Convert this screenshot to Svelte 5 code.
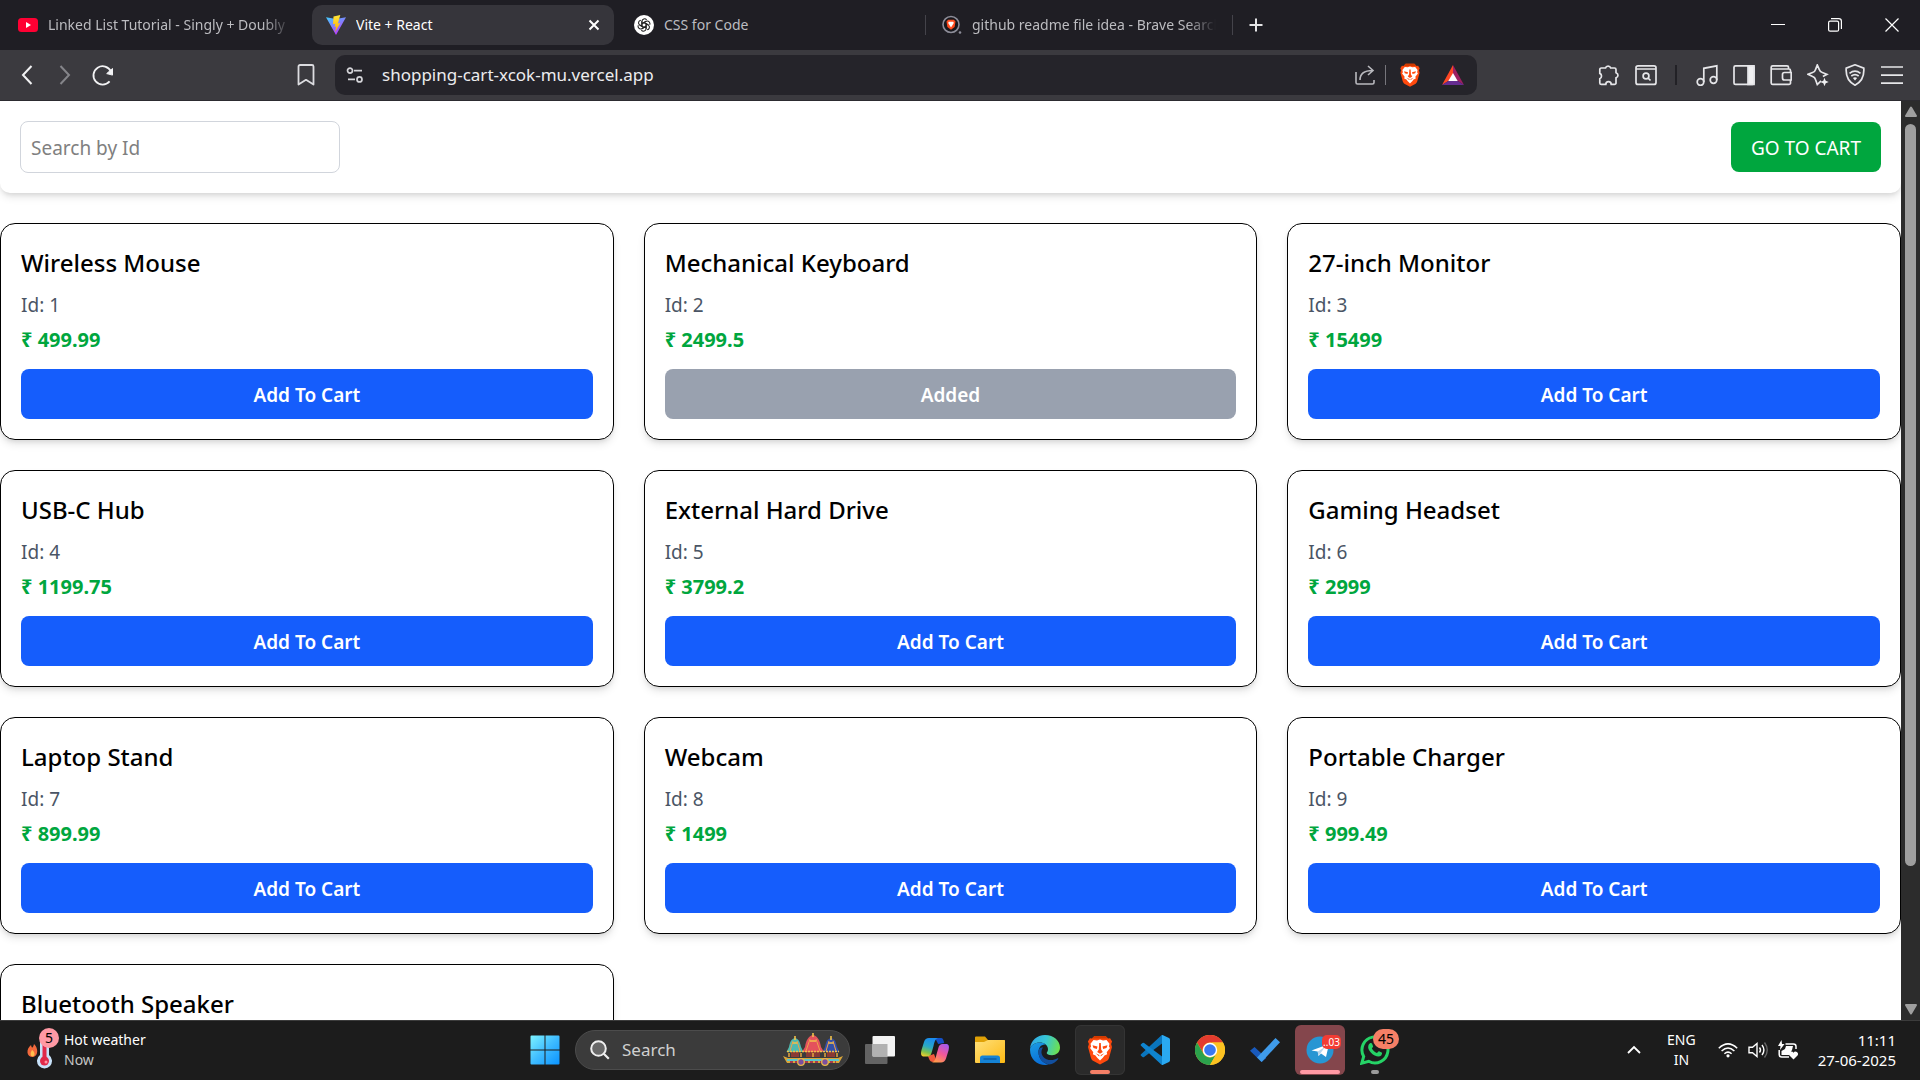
<script>
  const products = $state([
    { id: 1, title: 'Wireless Mouse', price: 499.99, added: false },
    { id: 2, title: 'Mechanical Keyboard', price: 2499.5, added: true },
    { id: 3, title: '27-inch Monitor', price: 15499, added: false },
    { id: 4, title: 'USB-C Hub', price: 1199.75, added: false },
    { id: 5, title: 'External Hard Drive', price: 3799.2, added: false },
    { id: 6, title: 'Gaming Headset', price: 2999, added: false },
    { id: 7, title: 'Laptop Stand', price: 899.99, added: false },
    { id: 8, title: 'Webcam', price: 1499, added: false },
    { id: 9, title: 'Portable Charger', price: 999.49, added: false },
    { id: 10, title: 'Bluetooth Speaker', price: 1999.99, added: false }
  ]);
  let query = $state('');
  const shown = $derived(products.filter((p) => String(p.id).includes(query.trim())));
</script>

{#snippet lion(size)}
  <svg width={size} height={size} viewBox="0 0 30 30" aria-hidden="true">
    <path d="M9.5 1h11l2.6 2.6 2-.3 2 3.2-1 2.6.9 3-2.9 10.6c-.5 1.6-1.2 2.4-2.6 3.4L15 29.600l-6.500-3.500c-1.400-1-2.100-1.800-2.600-3.400L3 12.100l.9-3-1-2.600 2-3.200 2 .3z" fill="#ff4a0e" />
    <path d="M9.500 1h11l2.600 2.600H6.900z" fill="#d13a00" />
    <path d="M15 4.500l3 .9 3.500-.5 3 3.900-.6 2.800 1 1.500-3.200 4.200.5 2-2.700 1.200-1.700 2.200L15 25.500l-2.800-2.800-1.700-2.200-2.700-1.200.5-2-3.200-4.200 1-1.500-.6-2.800 3-3.900 3.500.5z" fill="#fff" />
    <path d="M7.500 10.300l5 1.300-.7 2.300-3.300-1zM22.500 10.300l-5 1.300.7 2.300 3.300-1zM14.200 8h1.600l.4 6.500 1.600 2.400L15 18.800l-2.800-1.900 1.600-2.400zM10.600 18.300l3.700 1.700v1.500zM19.400 18.300l-3.700 1.700v1.500z" fill="#ff4a0e" />
  </svg>
{/snippet}

<div class="screen">
  <nav class="tabs" aria-label="Tabs">
    <button class="tab">
      <svg width="20" height="20" viewBox="0 0 20 20" aria-hidden="true"><rect y="3" width="20" height="14" rx="3.500" fill="#ff0033" /><path d="M8 7v6l5-3z" fill="#fff" /></svg>
      <span class="label faded">Linked List Tutorial - Singly + Doubly</span>
    </button>
    <div class="tab active">
      <svg width="20" height="20" viewBox="0 0 20 20" aria-hidden="true">
        <defs>
          <linearGradient id="vp" x1="0" y1="0" x2=".6" y2="1"><stop offset="0" stop-color="#41d1ff" /><stop offset="1" stop-color="#bd34fe" /></linearGradient>
          <linearGradient id="vy" x1="0" y1="0" x2="0" y2="1"><stop offset="0" stop-color="#ffe83a" /><stop offset="1" stop-color="#ffa800" /></linearGradient>
        </defs>
        <path d="M0 2.300L10 4l10-1.700L10 20z" fill="url(#vp)" />
        <path d="M14.300 0L7.500 1.400 7 9.200l2.200-.5-.7 3.300 1.700-.4-1.200 5.600 5.300-9.300-2.400.5z" fill="url(#vy)" />
      </svg>
      <span class="label">Vite + React</span>
      <button class="icon close" aria-label="Close tab">
        <svg width="12" height="12" viewBox="0 0 12 12"><path d="M1.500 1.500l9 9M10.500 1.500l-9 9" stroke="#fff" stroke-width="2" /></svg>
      </button>
    </div>
    <button class="tab">
      <svg width="20" height="20" viewBox="0 0 20 20" aria-hidden="true">
        <circle cx="10" cy="10" r="10" fill="#fff" />
        <g fill="none" stroke="#222" stroke-width="1.100">
          {#each [0, 60, 120, 180, 240, 300] as turn}
            <path transform="rotate({turn} 10 10)" d="M7.900 11.200V6.200a2.600 2.600 0 0 1 4.700-1.300M7.900 8.800L12.200 6.300" />
          {/each}
        </g>
      </svg>
      <span class="label">CSS for Code</span>
    </button>
    <button class="tab divided">
      <svg width="20" height="20" viewBox="0 0 20 20" aria-hidden="true">
        <circle cx="9" cy="9.500" r="8" fill="#17171c" stroke="#8d8d99" stroke-width="1.600" />
        <path d="M6 4.800h6l1.500 1.700-.9 5.500L9 14.800 5.400 12l-.9-5.500z" fill="#ff4a1c" />
        <path d="M6.700 6.800h4.600l.5 1.300L9 12.500 6.200 8.100z" fill="#fff" />
        <circle cx="18" cy="17.500" r="1.300" fill="#8d8d99" />
      </svg>
      <span class="label faded">github readme file idea - Brave Search</span>
    </button>
    <button class="icon plus" aria-label="New tab">
      <svg width="14" height="14" viewBox="0 0 14 14"><path d="M7 .5v13M.5 7h13" stroke="#e4e4e6" stroke-width="2" /></svg>
    </button>
    <div class="window">
      <button class="icon" aria-label="Minimize"><svg width="14" height="14" viewBox="0 0 14 14"><path d="M0 6.500h14" stroke="#fff" /></svg></button>
      <button class="icon" aria-label="Restore"><svg width="14" height="14" viewBox="0 0 14 14" fill="none" stroke="#fff" stroke-width="1.200"><rect x=".6" y="3.200" width="10" height="10" rx="1.500" /><path d="M3 .7h7.800a2.600 2.600 0 0 1 2.600 2.600v7.700" /></svg></button>
      <button class="icon" aria-label="Close"><svg width="14" height="14" viewBox="0 0 14 14"><path d="M.5.5l13 13M13.500.5l-13 13" stroke="#fff" stroke-width="1.200" /></svg></button>
    </div>
  </nav>

  <div class="toolbar">
    <div class="nav">
      <button class="icon" aria-label="Back"><svg width="12" height="20" viewBox="0 0 12 20"><path d="M10.500 1L2 10l8.500 9" fill="none" stroke="#f2f2f4" stroke-width="2" /></svg></button>
      <button class="icon" aria-label="Forward"><svg width="12" height="20" viewBox="0 0 12 20"><path d="M1.500 1L10 10l-8.500 9" fill="none" stroke="#85858a" stroke-width="2" /></svg></button>
      <button class="icon" aria-label="Reload"><svg width="22" height="22" viewBox="0 0 22 22"><path d="M17.600 17.400A9.200 9.200 0 1 1 19 7.500" fill="none" stroke="#f2f2f4" stroke-width="1.800" /><path d="M20.500 4.500v6.600l-5.800-1.500z" fill="#f2f2f4" stroke="#f2f2f4" stroke-linejoin="round" /></svg></button>
      <button class="icon mark" aria-label="Bookmark"><svg width="18" height="22" viewBox="0 0 18 22"><path d="M1.500 20.500V2.500a1.500 1.500 0 0 1 1.500-1.500h12a1.500 1.500 0 0 1 1.500 1.500v18L9 15.800z" fill="none" stroke="#dcdce0" stroke-width="1.800" stroke-linejoin="round" /></svg></button>
    </div>
    <div class="address">
      <svg width="18" height="16" viewBox="0 0 18 16" fill="none" stroke="#d4d4d8" stroke-width="1.700" aria-hidden="true"><circle cx="4" cy="3.600" r="2.500" /><path d="M8 3.600h8M2 12.400h7" /><circle cx="13.500" cy="12.400" r="2.500" /></svg>
      <input class="url" aria-label="Address" value="shopping-cart-xcok-mu.vercel.app" />
      <button class="icon" aria-label="Share"><svg width="20" height="20" viewBox="0 0 20 20" fill="none" stroke="#b9b9be" stroke-width="1.600"><path d="M1 7v10.500A1.500 1.500 0 0 0 2.500 19h15a1.500 1.500 0 0 0 1.500-1.500v-2.500M5 15C5 9 9 5.500 17.500 5.500M13 1l5 4.500-5 4.500" /></svg></button>
      <span class="bar"></span>
      <button class="icon shields" aria-label="Brave Shields">{@render lion(24)}</button>
      <button class="icon" aria-label="Brave Rewards"><svg width="22" height="20" viewBox="0 0 22 20"><path d="M11 0L0 20l11-7z" fill="#ff4724" /><path d="M11 0l11 20-11-7z" fill="#9e1f63" /><path d="M0 20h22l-11-7z" fill="#662d91" /><path d="M11 8l4.700 8H6.300z" fill="#fff" /></svg></button>
    </div>
    <div class="tools">
      <button class="icon" aria-label="Extensions"><svg width="22" height="22" viewBox="0 0 22 22"><path d="M3.500 4H7.500a2.700 2.700 0 0 1 5.200 0h3.800a1.500 1.500 0 0 1 1.500 1.500v3.200a2.700 2.700 0 0 1 0 5.200v5a1.500 1.500 0 0 1-1.500 1.500h-3.300a2.700 2.700 0 0 0-5.400 0H3.300A1.500 1.500 0 0 1 1.800 19v-4.300a2.900 2.900 0 0 0 0-5.300V5.500A1.500 1.500 0 0 1 3.500 4z" /></svg></button>
      <button class="icon" aria-label="Search in page"><svg width="22" height="22" viewBox="0 0 22 22"><rect x="1" y="1.800" width="20" height="18.600" rx="2" /><path d="M1 5h20M13 14l2.500 2.500" /><circle cx="11" cy="12" r="2.900" /></svg></button>
      <span class="bar dark"></span>
      <button class="icon" aria-label="Media"><svg width="22" height="22" viewBox="0 0 22 22"><circle cx="4.500" cy="18" r="3.300" /><circle cx="17.500" cy="16" r="3.300" /><path d="M7.800 18V4.300l13-2.500V16M7.800 4.500" /></svg></button>
      <button class="icon" aria-label="Sidebar"><svg width="22" height="22" viewBox="0 0 22 22"><rect x="1" y="1.800" width="20" height="18.600" rx="1.500" /><path d="M15 1.800h6v18.600h-6z" fill="#f0f0f2" /></svg></button>
      <button class="icon" aria-label="Wallet"><svg width="22" height="22" viewBox="0 0 22 22"><path d="M20.500 8.500V6.500A1.500 1.500 0 0 0 19 5H1.200v14A1.500 1.500 0 0 0 2.700 20.400H19a1.500 1.500 0 0 0 1.500-1.500v-2.500M1.200 5V3.300a1.500 1.500 0 0 1 1.500-1.500H17A1.500 1.500 0 0 1 18.500 3.300V5M21.200 8.500h-6.700a2 2 0 0 0-2 2v3.500a2 2 0 0 0 2 2h6.700z" /></svg></button>
      <button class="icon" aria-label="Leo assistant"><svg width="22" height="22" viewBox="0 0 22 22"><path d="M14 16.800L10.300 20.500 8.500 15.500Q7.900 13.200 5.600 12.500L1 10.300 5.600 8.500Q7.900 7.900 8.500 5.600L10.300 1l2 4.600Q13 7.900 15.300 8.500l4.600 1.800-4 2.200" /><path d="M17.500 13.800l1.200 3 3 1.200-3 1.200-1.200 3-1.200-3-3-1.200 3-1.200z" fill="#f0f0f2" stroke="none" /></svg></button>
      <button class="icon" aria-label="VPN"><svg width="22" height="22" viewBox="0 0 22 22"><path d="M11 .8l8.800 3.400c.5 7-1 13-8.800 17C3.200 17.200 1.700 11.200 2.200 4.200z" /><path d="M5.500 9.300q5.500-4.400 11 0M7.300 12q3.700-2.900 7.400 0" /><path d="M8.900 14q2.100-1.700 4.200 0L11 16.500z" fill="#f0f0f2" stroke="none" /></svg></button>
      <button class="icon" aria-label="Menu"><svg width="22" height="22" viewBox="0 0 22 22"><path d="M0 3h22M0 11.200h22M0 19.200h22" /></svg></button>
    </div>
  </div>

  <div class="view">
    <main>
      <header>
        <input class="search" placeholder="Search by Id" aria-label="Search by Id" bind:value={query} />
        <button class="go">GO TO CART</button>
      </header>
      <div class="grid">
        {#each shown as product (product.id)}
          <article>
            <h2>{product.title}</h2>
            <p class="id">Id: {product.id}</p>
            <p class="price">₹ {product.price}</p>
            <button class="add" class:added={product.added} onclick={() => (product.added = true)}>
              {product.added ? 'Added' : 'Add To Cart'}
            </button>
          </article>
        {/each}
      </div>
    </main>
    <div class="scroll" aria-hidden="true">
      <svg width="12" height="12" viewBox="0 0 12 12"><path d="M6 1.500L11 10H1z" fill="#9f9f9f" stroke="#9f9f9f" stroke-width="2" stroke-linejoin="round" /></svg>
      <div class="track"><div class="thumb"></div></div>
      <svg width="12" height="12" viewBox="0 0 12 12"><path d="M6 10.500L11 2H1z" fill="#9f9f9f" stroke="#9f9f9f" stroke-width="2" stroke-linejoin="round" /></svg>
    </div>
  </div>

  <footer>
    <button class="weather">
      <span class="heat">
        <svg width="36" height="44" viewBox="0 0 36 44" aria-hidden="true">
          <path d="M5 17c1 4 2 3 3-1 4 3 5 12-1 13-7 0-7-8-2-12z" fill="#f2693c" />
          <path d="M6 22c2 1 4 5 1 6.500-3 0-3-3.500-1-6.500z" fill="#ffc04d" />
          <path d="M14 10a4.500 4.500 0 0 1 9 0v17a7.500 7.500 0 1 1-9 0z" fill="#c8e2fa" />
          <path d="M18.500 14v18" stroke="#e0294a" stroke-width="4" /><circle cx="18.500" cy="33" r="4.500" fill="#e0294a" /><circle cx="20" cy="34" r="1.500" fill="#ff8fa0" />
        </svg>
        <span class="count">5</span>
      </span>
      <span class="words"><span>Hot weather</span><span class="dim">Now</span></span>
    </button>

    <div class="apps">
      <button class="app" aria-label="Start">
        <svg width="30" height="30" viewBox="0 0 30 30">
          <defs><linearGradient id="win" x1="0" y1="0" x2="1" y2="1"><stop offset="0" stop-color="#7df3ff" /><stop offset=".5" stop-color="#3fbcff" /><stop offset="1" stop-color="#0a93ff" /></linearGradient></defs>
          <path d="M1.500.5H14.500v14H.5v-13a1 1 0 0 1 1-1zM15.500.5h13a1 1 0 0 1 1 1v13h-14zM.5 15.500h14v14h-13a1 1 0 0 1-1-1zM15.500 15.500h14v13a1 1 0 0 1-1 1h-13z" fill="url(#win)" />
        </svg>
      </button>
      <label class="find">
        <svg width="20" height="20" viewBox="0 0 20 20" aria-hidden="true"><circle cx="8.500" cy="8.500" r="7.300" fill="#686868" stroke="#efefef" stroke-width="2" /><path d="M13.800 13.800l5 5" stroke="#efefef" stroke-width="2.200" /></svg>
        <input placeholder="Search" aria-label="Search" />
        <svg width="62" height="34" viewBox="0 0 62 34" aria-hidden="true">
          <path d="M1 23l5 2h50l5-2-4 7H5z" fill="#d9a63a" />
          <path d="M5 26h52v2H5z" fill="#59c7cf" /><path d="M8 29h46" stroke="#a93a4b" stroke-width="2" stroke-dasharray="3 2" />
          <path d="M9 17h8v7H9zM24 18h14v6H24zM45 17h8v7h-8z" fill="#8a3a34" />
          <path d="M13 5c4 1 5 4 6 9l2.500 5h-17L7 14c1-5 2-8 6-9z" fill="#4fb9ae" />
          <path d="M31 2c5 1 7 6 8 12l3 5H20l3-5c1-6 3-11 8-12z" fill="#e4525c" />
          <path d="M49 5c4 1 5 4 6 9l2.500 5h-17L43 14c1-5 2-8 6-9z" fill="#3350a8" />
          <path d="M13 3v4M31 0v4M49 3v4M10 10h6M28 8h6M46 10h6" stroke="#f2c14a" stroke-width="1.600" />
          <path d="M5 18.500h16M20 18.500h22M41 18.500h16" stroke="#f2c14a" stroke-width="1.600" stroke-dasharray="2 1" />
          <path d="M11 8L8 18M15 8l3 10M28 6l-4 12M34 6l4 12M47 8l-3 10M51 8l3 10" stroke="#f0a04a" stroke-width="1" />
          <path d="M7 20v4M19 20v4M31 20v4M43 20v4M55 20v4" stroke="#e8a53c" stroke-width="1.500" />
          <g fill="#7a4fa0" stroke="#e8b64a" stroke-width="1.300"><circle cx="19" cy="29" r="3.300" /><circle cx="43" cy="29" r="3.300" /></g>
        </svg>
      </label>
      <button class="app" aria-label="Task view">
        <svg width="30" height="28" viewBox="0 0 30 28"><rect y="8" width="22.500" height="20" rx="1" fill="#636363" /><rect x="7.500" width="22.500" height="20.500" rx="1" fill="#f3f3f3" /><path d="M7.500 8h15v12.500h-15z" fill="#b1b1b1" /></svg>
      </button>
      <button class="app" aria-label="Copilot">
        <svg width="30" height="28" viewBox="0 0 30 28">
          <defs>
            <linearGradient id="c1" x1=".5" y1="0" x2=".2" y2="1"><stop offset="0" stop-color="#1a8cf0" /><stop offset=".45" stop-color="#2aa9c5" /><stop offset=".75" stop-color="#7cc250" /><stop offset="1" stop-color="#f5cf2b" /></linearGradient>
            <linearGradient id="c2" x1=".8" y1="0" x2=".3" y2="1"><stop offset="0" stop-color="#a35af0" /><stop offset=".5" stop-color="#f0579a" /><stop offset="1" stop-color="#ff9a4a" /></linearGradient>
          </defs>
          <path d="M15 2h6c2 0 2.500 2 3.200 5l-6 1z" fill="#1450c8" /><path d="M8 20l6-2 3 8h-4c-3 0-4-3-5-6z" fill="#f05a3c" />
          <path d="M9 2h9c-3 1-3.500 4-4.500 8l-2 7c-.6 2-2 3.500-4 3.500H4C1 20.500.5 18 1.500 14L4 6c.8-2.500 2.500-4 5-4z" fill="url(#c1)" />
          <path d="M21 26.500h-9c3-1 3.500-4 4.500-8l2-7c.6-2 2-3.500 4-3.500H26c3 0 3.500 2.500 2.500 6.500l-2.500 8c-.8 2.500-2.500 4-5 4z" fill="url(#c2)" />
        </svg>
      </button>
      <button class="app" aria-label="File Explorer">
        <svg width="30" height="28" viewBox="0 0 30 28">
          <defs><linearGradient id="fo" x1="0" y1="0" x2="1" y2="1"><stop offset="0" stop-color="#ffe07a" /><stop offset="1" stop-color="#fdb913" /></linearGradient></defs>
          <path d="M0 1.500Q0 .5 1 .5h9l3 3.500H29q1 0 1 1v4H0z" fill="#e0a106" /><path d="M0 6h9l4-2h16q1 0 1 1v21q0 1-1 1H1q-1 0-1-1z" fill="url(#fo)" /><path d="M5 27v-5q0-2.500 2.500-2.500h15Q25 19.500 25 22v5z" fill="#1583d6" /><path d="M8.500 23h13" stroke="#0b539b" stroke-width="1.200" />
        </svg>
      </button>
      <button class="app" aria-label="Edge">
        <svg width="30" height="30" viewBox="0 0 30 30">
          <defs>
            <linearGradient id="e1" x1="0" y1=".3" x2="1" y2=".5"><stop offset="0" stop-color="#2fa8e8" /><stop offset=".5" stop-color="#37c6d4" /><stop offset="1" stop-color="#6de04f" /></linearGradient>
            <linearGradient id="e2" x1="0" y1="0" x2=".4" y2="1"><stop offset="0" stop-color="#1b9de2" /><stop offset="1" stop-color="#0a6fd8" /></linearGradient>
          </defs>
          <path d="M.1 13.500C.8 5.500 7 0 15 0c9 0 15 6 15 12.500 0 5-4 7.700-8 7.700-3.500 0-5.300-1.200-5.300-2.200 0-.8 1.300-1.500 1.300-3.800C18 10 14 7.500 9.700 7.500 5 7.500 1.500 10 .1 13.500z" fill="url(#e1)" />
          <path d="M.1 13.500C1.500 10 5 7.500 9.700 7.500c2.500 0 4.800.8 6.300 2.200C11 9 8.500 13 8.500 17c0 6 4 11 10 12.600C9 31.500-.8 25 .1 13.500z" fill="url(#e2)" />
          <path d="M13 12.500c-3 4-1.500 9.500 3.500 11.700 4 1.700 8 .8 11-.9.6-.3 1 .2.700.7-2 3-5.500 5-9.200 5.600C12 28 8.500 23 8.500 17c0-3 1.500-5 4.500-4.500z" fill="#124f9e" />
        </svg>
      </button>
      <button class="app current" aria-label="Brave">{@render lion(30)}<span class="run coral"></span></button>
      <button class="app" aria-label="Visual Studio Code">
        <svg width="30" height="30" viewBox="0 0 30 30"><path d="M21.500.2L1 19.200a1 1 0 0 0 0 1.500L2.500 22a1.300 1.300 0 0 0 1.600.1L28 4z" fill="#0a75bd" /><path d="M21.500 29.800L1 10.800a1 1 0 0 1 0-1.500L2.500 8a1.300 1.300 0 0 1 1.600-.1L28 26z" fill="#0f84cf" /><path d="M21.500.2a1.800 1.800 0 0 1 1.600.1l5.900 2.800a1.800 1.800 0 0 1 1 1.600v20.600a1.800 1.800 0 0 1-1 1.600l-5.900 2.800a1.800 1.800 0 0 1-1.600 0c.6 0 .5-.6.500-1.300V1.600c0-.7 0-1.200-.5-1.400z" fill="#2aa9f2" /></svg>
      </button>
      <button class="app" aria-label="Chrome">
        <svg width="30" height="30" viewBox="0 0 30 30"><circle cx="15" cy="15" r="15" fill="#fcc934" /><path d="M2 7.500A15 15 0 0 1 28 7.500H15a7.500 7.500 0 0 0-6.500 11.200z" fill="#e33b2e" /><path d="M2 7.500A15 15 0 0 0 15 30l6.500-11.300a7.500 7.500 0 0 1-13 0z" fill="#2ba24c" /><path d="M28 7.500A15 15 0 0 1 15 30l6.500-11.300A7.500 7.500 0 0 0 15 7.500z" fill="#fcc221" /><circle cx="15" cy="15" r="7.200" fill="#fff" /><circle cx="15" cy="15" r="5.800" fill="#3a78f0" /></svg>
      </button>
      <button class="app" aria-label="To Do">
        <svg width="30" height="30" viewBox="0 0 30 30"><path d="M4.500 12l11.800 11-4.800 4L0 15.800z" fill="#195abd" /><path d="M7 22.500L25.500 3 30 7.200 11.700 27z" fill="#3f9bea" /></svg>
      </button>
      <button class="app alert" aria-label="Telegram">
        <svg width="30" height="30" viewBox="0 0 30 30"><circle cx="15" cy="15" r="13.500" fill="#2796d3" /><path d="M6.500 15.500L24 9l-3 13-5-3.500-2.500 2.500-.8-4.500z" fill="#fff" /><path d="M12.700 16.500L20 12l-6.500 9z" fill="#b6d5ec" /></svg>
        <span class="run pink"></span>
        <span class="tag">..03</span>
      </button>
      <button class="app" aria-label="WhatsApp">
        <svg width="30" height="30" viewBox="0 0 30 30"><path d="M1.800 28.200l1.900-6.800a13 13 0 1 1 5 4.900z" fill="none" stroke="#25d366" stroke-width="3" /><path d="M10 8.200c.8-.5 1.600-.4 2 .4l1.100 2.600c.2.600-1.200 2-1.200 2.200 1.200 2.200 2.900 3.700 5 4.600.5 0 1.500-2 2.200-1.700l2.600 1.300c.7.400.3 2-.5 2.800-1.500 1.400-3.700 1.400-6.500.1-3-1.400-5.300-4-6.200-6.400-.7-2-.3-4.800 1.500-5.900z" fill="#25d366" /></svg>
        <span class="run small"></span>
        <span class="badge">45</span>
      </button>
    </div>

    <div class="tray">
      <button class="icon" aria-label="Show hidden icons"><svg width="14" height="10" viewBox="0 0 14 10"><path d="M1 8l6-6 6 6" fill="none" stroke="#fff" stroke-width="1.800" /></svg></button>
      <button class="lang"><span>ENG</span><span>IN</span></button>
      <button class="status" aria-label="Network, volume and battery">
        <svg width="20" height="20" viewBox="0 0 20 20" fill="none" stroke="#fff" stroke-width="1.500"><path d="M.8 8.300Q10-.5 19.200 8.300M3.600 11q6.400-6 12.800 0M6.400 13.700q3.600-3.200 7.200 0" /><circle cx="10" cy="15.800" r="1.600" fill="#fff" stroke="none" /></svg>
        <svg width="20" height="20" viewBox="0 0 20 20" fill="none" stroke="#fff" stroke-width="1.400"><path d="M1 7.300v5.400h3.500L9 16.500v-13L4.500 7.300zM11.500 7.500q2 2.500 0 5M14 5q3.800 5 0 10" /><path d="M16.500 2.500q5.500 7.500 0 15" stroke="#666" /></svg>
        <svg width="20" height="20" viewBox="0 0 20 20"><path d="M7.500 4h8a2.500 2.500 0 0 1 2.500 2.500V9M1.200 10v4.500A2.500 2.500 0 0 0 3.700 17H11" fill="none" stroke="#fff" stroke-width="1.500" /><path d="M8 6h7l-1 4-3 5H3.500v-4L7 9zM3.500 0L0 6h2.500L2 10l4.500-6H4z" fill="#fff" /><path d="M15.500 19.500l-4-4a2.400 2.400 0 0 1 4-2.800 2.400 2.400 0 0 1 4 2.800z" fill="#fff" /></svg>
      </button>
      <button class="clock"><span>11:11</span><span>27-06-2025</span></button>
    </div>
  </footer>
</div>

<style>
  :global(body) {
    margin: 0;
  }
  .screen {
    height: 100vh;
    display: flex;
    flex-direction: column;
    overflow: hidden;
    background: #fff;
    font-family: 'Noto Sans', 'Open Sans', sans-serif;
    font-size: 14px;
    line-height: 20px;
  }
  .screen * {
    box-sizing: border-box;
  }
  button,
  input {
    font: inherit;
    color: inherit;
    background: none;
    border: 0;
    padding: 0;
    margin: 0;
    min-width: 0;
  }
  button {
    cursor: pointer;
  }
  svg {
    display: block;
    flex: none;
  }
  .icon {
    display: flex;
    align-items: center;
    justify-content: center;
    flex: none;
  }

  .tabs {
    flex: none;
    height: 50px;
    display: flex;
    align-items: center;
    gap: 6px;
    background: #1f1e24;
    color: #bcbcc0;
    padding-left: 4px;
  }
  .tab {
    width: 302px;
    height: 40px;
    padding: 0 14px;
    display: flex;
    align-items: center;
    gap: 10px;
    border-radius: 10px;
    text-align: left;
  }
  .tab.active {
    background: #36353b;
    color: #fff;
  }
  .tab.divided {
    position: relative;
  }
  .tab.divided::before,
  .tab.divided::after {
    content: '';
    position: absolute;
    left: -3px;
    width: 1px;
    height: 20px;
    background: #44434a;
  }
  .tab.divided::after {
    left: auto;
    right: -3px;
  }
  .label {
    flex: 1;
    overflow: hidden;
    white-space: nowrap;
  }
  .faded {
    mask-image: linear-gradient(to right, #000 88%, transparent);
  }
  .plus {
    width: 40px;
    height: 40px;
  }
  .window {
    margin-left: auto;
    display: flex;
    height: 50px;
  }
  .window .icon {
    width: 57px;
  }

  .toolbar {
    flex: none;
    height: 51px;
    display: flex;
    align-items: center;
    background: #3b3a3f;
    border-bottom: 1px solid #2c2b30;
  }
  .nav {
    width: 335px;
    padding: 0 18px 0 16px;
    display: flex;
    align-items: center;
    gap: 16px;
  }
  .nav .icon {
    width: 22px;
  }
  .nav .mark {
    margin-left: auto;
  }
  .address {
    flex: 1;
    height: 40px;
    padding: 0 13px 0 11px;
    display: flex;
    align-items: center;
    gap: 10px;
    border-radius: 10px;
    background: #25242a;
    color: #ececee;
  }
  .url {
    flex: 1;
    padding: 0 8px;
    font-size: 17px;
    line-height: 24px;
    outline: none;
  }
  .shields {
    margin: 0 10px 0 2px;
  }
  .bar {
    width: 1px;
    height: 20px;
    background: #77767c;
  }
  .tools {
    width: 443px;
    padding-right: 17px;
    display: flex;
    align-items: center;
    justify-content: flex-end;
    gap: 15px;
  }
  .tools svg {
    fill: none;
    stroke: #e6e6e9;
    stroke-width: 1.7;
  }
  .dark {
    width: 2px;
    margin: 0 4px 0 3px;
    background: #222126;
  }

  .view {
    flex: 1;
    min-height: 0;
    display: flex;
  }
  main {
    flex: 1;
    overflow: hidden;
    font-size: 19px;
    line-height: 30px;
  }
  header {
    display: flex;
    align-items: center;
    justify-content: space-between;
    padding: 20px;
    border-radius: 0 0 10px 10px;
    box-shadow: 0 5px 8px -1px rgb(0 0 0 / 0.1), 0 3px 5px -2px rgb(0 0 0 / 0.1);
  }
  .search {
    width: 320px;
    padding: 11px 10px 9px;
    border: 1px solid #d1d5dc;
    border-radius: 8px;
    color: #111;
  }
  .search::placeholder {
    color: #808080;
  }
  .go {
    padding: 11px 20px 9px;
    border-radius: 8px;
    background: #00a63e;
    color: #fff;
  }
  .grid {
    display: grid;
    grid-template-columns: repeat(3, 1fr);
    gap: 30px;
    margin-top: 30px;
  }
  article {
    padding: 21px 20px 20px;
    border: 1px solid #000;
    border-radius: 15px;
    box-shadow: 0 5px 8px -1px rgb(0 0 0 / 0.1), 0 3px 5px -2px rgb(0 0 0 / 0.1);
  }
  h2,
  p {
    margin: 0;
  }
  h2 {
    font-size: 24px;
    line-height: 35px;
    font-weight: 500;
    margin-bottom: 10px;
    color: #000;
  }
  .id {
    color: #4a5565;
  }
  .price {
    margin: 5px 0 14px;
    color: #00a63e;
    font-size: 20px;
    font-weight: 700;
  }
  .add {
    width: 100%;
    padding: 11px 10px 9px;
    border-radius: 8px;
    background: #155dfc;
    color: #fff;
    font-weight: 600;
  }
  .added {
    background: #99a1af;
  }
  .scroll {
    width: 19px;
    padding: 5px 0;
    display: flex;
    flex-direction: column;
    align-items: center;
    background: #2c2c2c;
  }
  .track {
    flex: 1;
    padding: 6px 0;
  }
  .thumb {
    width: 11px;
    height: 85%;
    border-radius: 6px;
    background: #9f9f9f;
  }

  footer {
    flex: none;
    height: 60px;
    padding-bottom: 1px;
    display: grid;
    grid-template-columns: 1fr auto 1fr;
    align-items: center;
    background: #1c1c1c;
    border-top: 1px solid #3c3c3c;
    color: #fff;
  }
  .weather {
    justify-self: start;
    display: flex;
    align-items: center;
    padding-left: 26px;
    gap: 2px;
    text-align: left;
  }
  .heat {
    position: relative;
  }
  .count {
    position: absolute;
    top: 0;
    left: 13px;
    width: 20px;
    border-radius: 10px;
    background: #ff99a4;
    color: #000;
    text-align: center;
  }
  .words,
  .lang,
  .clock {
    display: flex;
    flex-direction: column;
  }
  .dim {
    color: #c5c5c5;
  }
  .apps {
    display: flex;
    align-items: center;
    gap: 5px;
  }
  .app {
    position: relative;
    width: 50px;
    height: 50px;
    border-radius: 6px;
    display: flex;
    align-items: center;
    justify-content: center;
  }
  .current {
    background: #2a2a2a;
    box-shadow: inset 0 0 0 1px #343434;
  }
  .alert {
    background: #84464c;
  }
  .run {
    position: absolute;
    bottom: 1px;
    width: 20px;
    height: 4px;
    border-radius: 2px;
  }
  .coral {
    background: #f57f66;
  }
  .pink {
    width: 40px;
    background: #ff99a4;
  }
  .small {
    width: 8px;
    background: #9a9a9a;
  }
  .tag {
    position: absolute;
    top: 10px;
    right: 4px;
    width: 19px;
    height: 14px;
    border-radius: 5px;
    background: #f23c34;
    color: #fff;
    font-size: 10px;
    line-height: 14px;
    text-align: center;
  }
  .badge {
    position: absolute;
    top: 4px;
    right: 1px;
    width: 26px;
    border-radius: 10px;
    background: #f57f66;
    color: #000;
    text-align: center;
  }
  .find {
    width: 275px;
    height: 40px;
    padding: 0 5px 0 14px;
    display: flex;
    align-items: center;
    gap: 12px;
    border: 1px solid #4c4c4c;
    border-radius: 20px;
    background: #3b3b3b;
  }
  .find input {
    flex: 1;
    font-size: 17px;
    line-height: 24px;
    outline: none;
  }
  .find input::placeholder {
    color: #d0d0d0;
  }
  .tray {
    justify-self: end;
    display: flex;
    align-items: center;
    gap: 20px;
    padding-right: 24px;
  }
  .lang {
    text-align: center;
    padding: 0 2px 0 6px;
  }
  .status {
    display: flex;
    gap: 10px;
  }
  .clock {
    font-size: 15px;
    text-align: right;
  }
</style>
